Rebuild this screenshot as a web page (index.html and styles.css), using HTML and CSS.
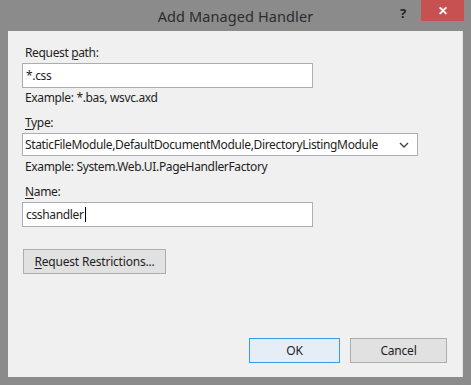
FILE: index.html
```html
<!DOCTYPE html>
<html lang="en">
<head>
  <meta charset="UTF-8">
  <title>Add Managed Handler</title>
  <link rel="stylesheet" href="styles.css">
</head>
<body>
  <div class="window">
    <!-- Barra de título -->
    <div class="titlebar">
      <span class="title">Add Managed Handler</span>
      <span class="help">?</span>
      <span class="close">&#x2715;</span>
    </div>

    <!-- Contenido del diálogo -->
    <div class="content">
      <label class="label first">Request <u>p</u>ath:</label>
      <div class="textbox">*.css</div>
      <p class="hint">Example: *.bas, wsvc.axd</p>

      <label class="label"><u>T</u>ype:</label>
      <div class="select">
        <span>StaticFileModule,DefaultDocumentModule,DirectoryListingModule</span>
        <svg width="10" height="6" viewBox="0 0 10 6"><path d="M1 1 L5 5 L9 1" fill="none" stroke="#444" stroke-width="1.4"/></svg>
      </div>
      <p class="hint hint-type">Example: System.Web.UI.PageHandlerFactory</p>

      <label class="label"><u>N</u>ame:</label>
      <div class="textbox">csshandler<span class="caret"></span></div>

      <button class="btn btn-restrict"><u>R</u>equest Restrictions...</button>

      <div class="footer">
        <button class="btn btn-default">OK</button>
        <button class="btn btn-cancel">Cancel</button>
      </div>
    </div>
  </div>
</body>
</html>
```

FILE: styles.css
```css
* { box-sizing: border-box; }
body {
  margin: 0;
  font-family: 'Noto Sans', 'Open Sans', sans-serif;
  font-size: 12px;
  color: #1e1e1e;
}
.window {
  width: 471px;
  height: 385px;
  background: #8b8b8b;
  display: flex;
  flex-direction: column;
  padding: 0 8px 8px 8px;
}
.titlebar {
  height: 31px;
  position: relative;
  display: flex;
  justify-content: center;
  align-items: center;
}
.title {
  font-size: 14.5px;
  color: #2b2b2b;
  letter-spacing: 0.1px;
}
.help {
  position: absolute;
  left: 392px;
  top: 4px;
  font-size: 13px;
  font-weight: 700;
  color: #222;
}
.close {
  position: absolute;
  left: 413px;
  top: 0;
  width: 43px;
  height: 21px;
  background: #c75050;
  color: #fff;
  font-size: 12px;
  font-weight: 700;
  display: flex;
  align-items: center;
  justify-content: center;
}
.content {
  flex: 1;
  background: #f0f0f0;
  display: flex;
  flex-direction: column;
  align-items: flex-start;
  padding: 0 15px 14px 14px;
  border-right: 1px solid #e4e4e4;
  letter-spacing: -0.35px;
}
.label {
  line-height: 16px;
  padding-left: 3px;
  margin-top: 9px;
  margin-bottom: 2px;
}
.label.first { margin-top: 14px; }
u { text-decoration-thickness: 1px; text-underline-offset: 2px; }
.textbox {
  width: 291px;
  height: 25px;
  background: #fff;
  border: 1px solid #abadb3;
  padding: 0 3px;
  line-height: 23px;
  display: flex;
  align-items: center;
}
.caret {
  display: inline-block;
  width: 1px;
  height: 15px;
  margin-left: 1px;
  background: #000;
}
.select {
  width: 396px;
  height: 23px;
  background: #fff;
  border: 1px solid #abadb3;
  display: flex;
  align-items: center;
  justify-content: space-between;
  padding: 0 8px 0 2px;
}
.hint {
  margin: 2px 0 0 0;
  line-height: 16px;
  padding-left: 3px;
}
.hint-type { margin-top: 3px; }
.btn {
  font-family: inherit;
  font-size: 12px;
  letter-spacing: -0.2px;
  color: #1e1e1e;
  background: #e1e1e1;
  border: 1px solid #adadad;
  height: 25px;
  padding: 0;
}
.btn-restrict {
  width: 143px;
  margin-top: 22px;
  margin-left: 1px;
}
.footer {
  margin-top: auto;
  align-self: flex-end;
  display: flex;
  gap: 10px;
}
.btn-default {
  width: 91px;
  border-color: #3c9ae0;
  background: #e5eef7;
}
.btn-cancel { width: 97px; }
```
